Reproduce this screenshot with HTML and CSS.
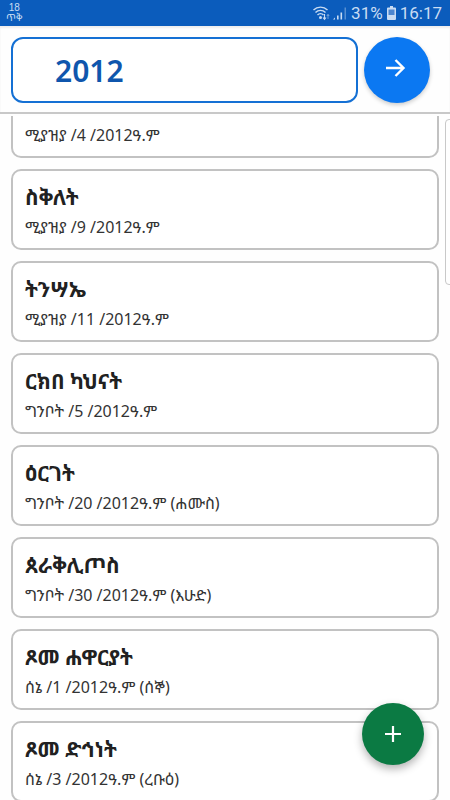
FILE: index.html
```html
<!DOCTYPE html>
<html lang="am">
<head>
    <meta charset="UTF-8">
    <meta name="viewport" content="width=device-width, initial-scale=1.0">
    <title>2012</title>
    <link rel="stylesheet" href="styles.css">
</head>
<body>

    <div class="status-bar">
        <div class="status-date">
            <span>18</span>
            <span>ጥቅ</span>
        </div>
        <div class="status-icons">
            <svg width="18" height="16" viewBox="0 0 18 16" fill="none" stroke="currentColor" stroke-width="1.4">
                <path d="M0.500 5a10 10 0 0 1 14 0M2.500 7.500a7 7 0 0 1 10 0M4.500 10a4 4 0 0 1 6 0"/>
                <circle cx="7.500" cy="12.500" r="1.500" fill="currentColor" stroke="none"/>
                <path d="M11.500 9v5M10 12.500l1.500 1.800 1.500-1.800" stroke-width="1.100"/>
                <path d="M15 14V9.500M13.800 11l1.200-1.600 1.200 1.600" stroke-width="1" opacity="0.5"/>
            </svg>
            <svg width="14" height="16" viewBox="0 0 14 16" fill="currentColor">
                <path d="M0 14.500l2-2v2zM4 10.500h1.600v4H4zM7.500 7.500h1.600v7H7.500z"/>
                <path d="M11.500 2.500H13v12h-1.500z" opacity="0.4"/>
            </svg>
            <span class="status-text">31%</span>
            <svg width="9" height="14" viewBox="0 0 9 14" fill="currentColor">
                <path d="M3 0h3v1.500H8a1 1 0 0 1 1 1V13a1 1 0 0 1-1 1H1a1 1 0 0 1-1-1V2.500a1 1 0 0 1 1-1h2z"/>
                <path d="M1.500 3.500h6V9h-6z" fill="#4c86d0"/>
            </svg>
            <span class="status-text">16:17</span>
        </div>
    </div>

    <form class="header">
        <input type="text" class="year-input" inputmode="numeric" aria-label="ዓ.ም" value="2012">
        <button type="button" class="round-btn go-btn" aria-label="2012">
            <svg width="24" height="24" viewBox="0 0 24 24" fill="none" stroke="currentColor" stroke-width="2.400">
                <path d="M1 10h17M10.500 2l8 8-8 8"/>
            </svg>
        </button>
    </form>

    <main class="list">
        <div class="card card-cut">
            <p>ሚያዝያ /4 /2012ዓ.ም</p>
        </div>
        <div class="card">
            <h2>ስቅለት</h2>
            <p>ሚያዝያ /9 /2012ዓ.ም</p>
        </div>
        <div class="card">
            <h2>ትንሣኤ</h2>
            <p>ሚያዝያ /11 /2012ዓ.ም</p>
        </div>
        <div class="card">
            <h2>ርክበ ካህናት</h2>
            <p>ግንቦት /5 /2012ዓ.ም</p>
        </div>
        <div class="card">
            <h2>ዕርገት</h2>
            <p>ግንቦት /20 /2012ዓ.ም (ሐሙስ)</p>
        </div>
        <div class="card">
            <h2>ጰራቅሊጦስ</h2>
            <p>ግንቦት /30 /2012ዓ.ም (እሁድ)</p>
        </div>
        <div class="card">
            <h2>ጾመ ሐዋርያት</h2>
            <p>ሰኔ /1 /2012ዓ.ም (ሰኞ)</p>
        </div>
        <div class="card">
            <h2>ጾመ ድኅነት</h2>
            <p>ሰኔ /3 /2012ዓ.ም (ረቡዕ)</p>
        </div>
        <div class="scroll-thumb"></div>
    </main>

    <button type="button" class="round-btn add-btn" aria-label="+">
        <svg width="24" height="24" viewBox="0 0 24 24" fill="none" stroke="currentColor" stroke-width="2.200">
            <path d="M4 12h16M12 4v16"/>
        </svg>
    </button>

</body>
</html>
```
FILE: styles.css
```css
* {
    box-sizing: border-box;
}

body {
    font-family: "Noto Sans", "Noto Sans Ethiopic", sans-serif;
    background: #fefefe;
    color: #212121;
    height: 100vh;
    margin: 0;
    display: flex;
    flex-direction: column;
    overflow: hidden;
}

/* Phone status bar */
.status-bar {
    background: #0b5cbc;
    color: #c9dcf3;
    height: 26px;
    padding: 0 8px 0 6px;
    display: flex;
    justify-content: space-between;
    align-items: center;
    flex-shrink: 0;
}

.status-date {
    display: flex;
    flex-direction: column;
    align-items: center;
    font-family: "Liberation Sans", "Noto Sans Ethiopic", sans-serif;
    font-size: 10px;
    line-height: 10px;
}

.status-icons {
    display: flex;
    align-items: center;
    gap: 4px;
}

.status-icons svg:first-child {
    margin-right: -2px;
}

.status-text {
    font-family: Roboto, sans-serif;
    font-size: 17px;
    line-height: 26px;
}

/* Year search */
.header {
    display: flex;
    align-items: center;
    gap: 6px;
    padding: 11px 20px 9px 11px;
    border-bottom: 2px solid #c8c8c8;
    box-shadow: inset 0 2px 2px #eeeeee;
    flex-shrink: 0;
}

.year-input {
    flex: 1;
    min-width: 0;
    height: 66px;
    padding: 0 42px;
    border: 2px solid #1470d4;
    border-radius: 12px;
    background: white;
    color: #0f56ad;
    font-family: inherit;
    font-size: 30px;
    font-weight: 600;
}

.round-btn {
    display: flex;
    align-items: center;
    justify-content: center;
    padding: 0;
    border: none;
    border-radius: 50%;
    color: white;
    cursor: pointer;
}

.go-btn {
    width: 66px;
    height: 66px;
    background: #0b78f2;
    box-shadow: 0 2px 4px rgba(0, 0, 0, 0.2);
}

/* Holiday cards */
.list {
    position: relative;
    flex: 1;
    min-height: 0;
    margin-top: 2px;
    padding: 0 11px;
    display: flex;
    flex-direction: column;
    gap: 11px;
    overflow: hidden;
}

.card {
    flex-shrink: 0;
    padding: 12px 12px 10px;
    border: 2px solid #c2c2c2;
    border-radius: 10px;
    background: white;
}

.card-cut {
    padding-top: 8px;
    border-top: none;
    border-top-left-radius: 0;
    border-top-right-radius: 0;
}

.card h2 {
    margin: 0 0 5px;
    font-size: 21px;
    font-weight: bold;
    line-height: 28px;
}

.card p {
    margin: 0;
    color: #333333;
    font-size: 16px;
    line-height: 22px;
}

.scroll-thumb {
    position: absolute;
    top: 3px;
    right: -4px;
    width: 9px;
    height: 166px;
    border: 1px solid #c8c8c8;
    border-radius: 4px;
}

.add-btn {
    position: fixed;
    right: 26px;
    bottom: 35px;
    width: 62px;
    height: 62px;
    background: #0b7a43;
    box-shadow: 0 4px 8px rgba(0, 0, 0, 0.3);
}
```
